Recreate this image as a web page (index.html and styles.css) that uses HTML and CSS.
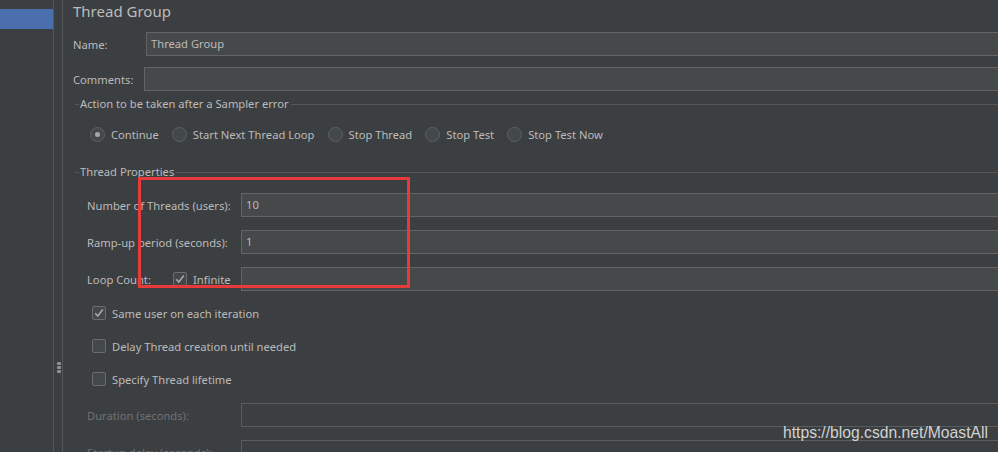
FILE: index.html
```html
<!DOCTYPE html>
<html>
<head>
<meta charset="utf-8">
<link rel="stylesheet" href="styles.css">
</head>
<body>
<div class="app">
  <div class="sidebar"><div class="sel"></div></div>
  <div class="divider">
    <div class="dots"><span></span><span></span><span></span></div>
  </div>
  <div class="main">
    <div class="title">Thread Group</div>
    <div class="row r-name"><label class="lbl w-name">Name:</label><div class="input">Thread Group</div></div>
    <div class="row r-comments"><label class="lbl w-comm">Comments:</label><div class="input"></div></div>

    <div class="legend g1"><span class="lead"></span><span class="ltext">Action to be taken after a Sampler error</span><span class="tail"></span></div>
    <div class="radios">
      <span class="radio on"></span><span class="rtext">Continue</span>
      <span class="radio"></span><span class="rtext">Start Next Thread Loop</span>
      <span class="radio"></span><span class="rtext">Stop Thread</span>
      <span class="radio"></span><span class="rtext">Stop Test</span>
      <span class="radio"></span><span class="rtext">Stop Test Now</span>
    </div>

    <div class="legend g2"><span class="lead"></span><span class="ltext">Thread Properties</span><span class="tail"></span></div>
    <div class="row prop r-threads"><label class="lbl w-prop">Number of Threads (users):</label><div class="input">10</div></div>
    <div class="row prop r-next"><label class="lbl w-prop">Ramp-up period (seconds):</label><div class="input">1</div></div>
    <div class="row prop r-next">
      <label class="lbl w-loop">Loop Count:</label>
      <span class="inf"><span class="cb checked"><svg viewBox="0 0 14 14" width="14" height="14"><path d="M3.2 7.2 L5.8 10 L10.8 3.4" fill="none" stroke="#a8a8a8" stroke-width="1.6"/></svg></span><span class="cbtext">Infinite</span></span>
      <div class="input"></div>
    </div>

    <div class="check c-first"><span class="cb checked"><svg viewBox="0 0 14 14" width="14" height="14"><path d="M3.2 7.2 L5.8 10 L10.8 3.4" fill="none" stroke="#a8a8a8" stroke-width="1.6"/></svg></span><span class="cbtext">Same user on each iteration</span></div>
    <div class="check"><span class="cb"></span><span class="cbtext">Delay Thread creation until needed</span></div>
    <div class="check"><span class="cb"></span><span class="cbtext">Specify Thread lifetime</span></div>

    <div class="row prop r-dur"><label class="lbl w-prop dis">Duration (seconds):</label><div class="input dinput"></div></div>
    <div class="row prop r-next"><label class="lbl w-prop dis">Startup delay (seconds):</label><div class="input dinput"></div></div>
  </div>
</div>
<div class="redbox"></div>
<div class="watermark">https://blog.csdn.net/MoastAll</div>
</body>
</html>
```
FILE: styles.css
```css
html, body {
  margin: 0;
  padding: 0;
  background: #3c3f41;
}
body {
  width: 998px;
  height: 452px;
  overflow: hidden;
  position: relative;
  font-family: "Noto Sans", "Open Sans", sans-serif;
  font-size: 11.2px;
  color: #bbbbbb;
}
.app {
  display: flex;
  height: 452px;
}
.sidebar {
  width: 53px;
  flex: none;
}
.sel {
  margin-top: 9px;
  height: 20px;
  background: #4b6eaf;
}
.divider {
  width: 8px;
  flex: none;
  border-left: 1px solid #555759;
  border-right: 1px solid #555759;
  display: flex;
  flex-direction: column;
  align-items: center;
}
.dots {
  margin-top: 362px;
  display: flex;
  flex-direction: column;
  gap: 1px;
  padding-left: 1px;
}
.dots span {
  width: 4px;
  height: 3px;
  background: #8e9092;
  border-radius: 1px;
}
.main {
  flex: 1;
  min-width: 0;
  padding-left: 10px;
  overflow: hidden;
}
.title {
  height: 32px;
  font-size: 15px;
  line-height: 23px;
  color: #bbbbbb;
}
.row {
  display: flex;
  align-items: center;
  height: 24px;
}
.lbl {
  flex: none;
  white-space: nowrap;
}
.w-name { width: 73px; }
.w-comm { width: 71px; }
.w-prop { width: 154px; }
.w-loop { width: 86px; }
.dis { color: #6f7173; }
.input {
  flex: 1;
  height: 24px;
  box-sizing: border-box;
  border: 1px solid #646464;
  border-right: none;
  background: #45494a;
  margin-right: -10px;
  padding-left: 4px;
  line-height: 22px;
  color: #bbbbbb;
}
.dinput {
  background: #3c3f41;
  border-color: #5a5c5e;
}
.r-comments { margin-top: 11px; }
.legend {
  display: flex;
  align-items: center;
  height: 14px;
  margin-left: 2px;
}
.g1 { margin-top: 6px; }
.g2 { margin-top: 21px; }
.lead {
  width: 4px;
  height: 1px;
  background: #555759;
}
.ltext {
  padding: 0 2px 0 1px;
  line-height: 14px;
}
.tail {
  flex: 1;
  height: 1px;
  background: #555759;
  margin-right: -10px;
}
.radios {
  display: flex;
  align-items: center;
  height: 20px;
  margin-top: 13px;
  padding-left: 17px;
}
.radio {
  width: 15px;
  height: 15px;
  box-sizing: border-box;
  border-radius: 50%;
  border: 1px solid #5e6163;
  background: #43484a;
  margin-right: 6px;
  display: flex;
  align-items: center;
  justify-content: center;
  flex: none;
}
.radio.on::after {
  content: "";
  width: 5px;
  height: 5px;
  border-radius: 50%;
  background: #a4a6a8;
}
.rtext {
  margin-right: 13px;
  white-space: nowrap;
}
.prop {
  padding-left: 12px;
  margin-left: 2px;
}
.r-threads { margin-top: 14px; }
.r-next { margin-top: 13px; }
.r-dur { margin-top: 14px; }
.inf {
  width: 68px;
  flex: none;
  display: flex;
  align-items: center;
}
.cb {
  width: 14px;
  height: 14px;
  box-sizing: border-box;
  border: 1px solid #6a6c6e;
  border-radius: 2px;
  background: #43484a;
  flex: none;
  display: flex;
  align-items: center;
  justify-content: center;
  margin-right: 6px;
}
.cb svg {
  display: block;
  flex: none;
}
.check {
  display: flex;
  align-items: center;
  height: 20px;
  margin-top: 13px;
  padding-left: 17px;
  margin-left: 2px;
}
.c-first { margin-top: 12px; }
.cbtext { white-space: nowrap; }
.redbox {
  position: absolute;
  left: 138px;
  top: 177px;
  width: 272px;
  height: 111px;
  box-sizing: border-box;
  border: 3px solid #e8393b;
}
.watermark {
  position: absolute;
  left: 783px;
  top: 423px;
  font-family: "Liberation Sans", Arial, sans-serif;
  font-size: 15.7px;
  line-height: 20px;
  color: #d2d2d2;
  white-space: nowrap;
}
```
